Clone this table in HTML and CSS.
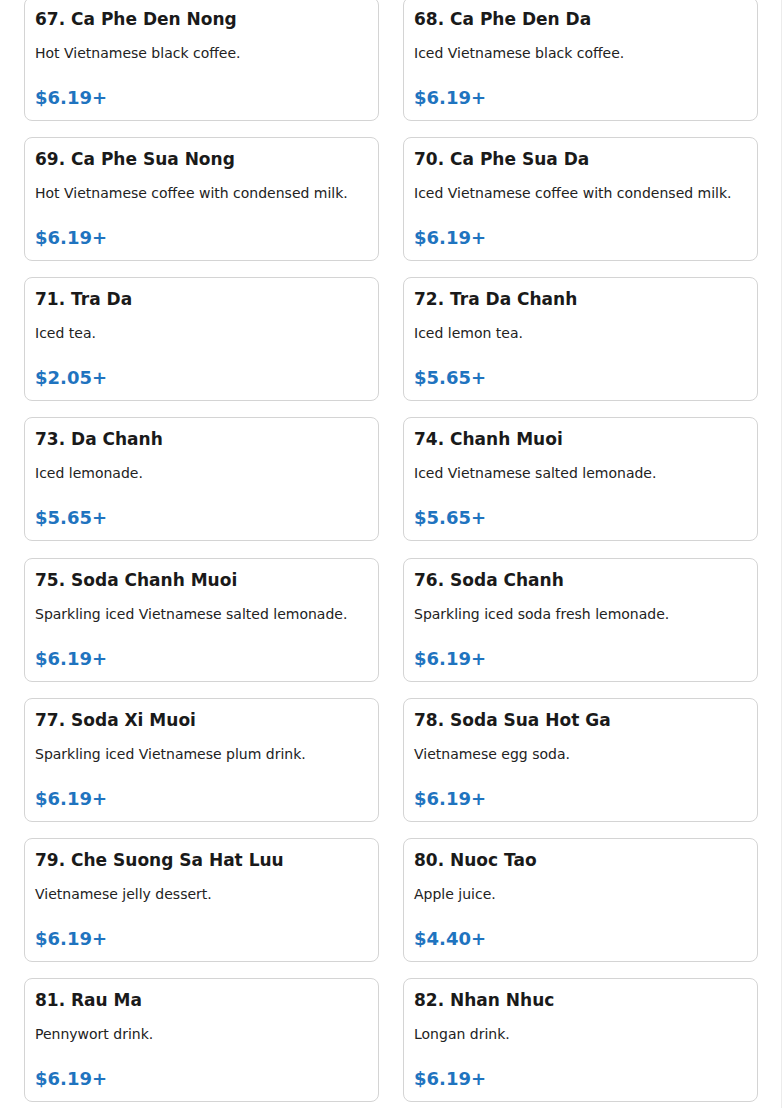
FILE: index.html
```html
<!DOCTYPE html>
<html>
<head>
<meta charset="utf-8">
<link rel="stylesheet" href="styles.css">
</head>
<body>
<div class="page">
  <div class="grid">
    <div class="card"><h3 class="name">67. Ca Phe Den Nong</h3><p class="desc">Hot Vietnamese black coffee.</p><div class="price">$6.19+</div></div>
    <div class="card"><h3 class="name">68. Ca Phe Den Da</h3><p class="desc">Iced Vietnamese black coffee.</p><div class="price">$6.19+</div></div>
    <div class="card"><h3 class="name">69. Ca Phe Sua Nong</h3><p class="desc">Hot Vietnamese coffee with condensed milk.</p><div class="price">$6.19+</div></div>
    <div class="card"><h3 class="name">70. Ca Phe Sua Da</h3><p class="desc">Iced Vietnamese coffee with condensed milk.</p><div class="price">$6.19+</div></div>
    <div class="card"><h3 class="name">71. Tra Da</h3><p class="desc">Iced tea.</p><div class="price">$2.05+</div></div>
    <div class="card"><h3 class="name">72. Tra Da Chanh</h3><p class="desc">Iced lemon tea.</p><div class="price">$5.65+</div></div>
    <div class="card"><h3 class="name">73. Da Chanh</h3><p class="desc">Iced lemonade.</p><div class="price">$5.65+</div></div>
    <div class="card"><h3 class="name">74. Chanh Muoi</h3><p class="desc">Iced Vietnamese salted lemonade.</p><div class="price">$5.65+</div></div>
    <div class="card"><h3 class="name">75. Soda Chanh Muoi</h3><p class="desc">Sparkling iced Vietnamese salted lemonade.</p><div class="price">$6.19+</div></div>
    <div class="card"><h3 class="name">76. Soda Chanh</h3><p class="desc">Sparkling iced soda fresh lemonade.</p><div class="price">$6.19+</div></div>
    <div class="card"><h3 class="name">77. Soda Xi Muoi</h3><p class="desc">Sparkling iced Vietnamese plum drink.</p><div class="price">$6.19+</div></div>
    <div class="card"><h3 class="name">78. Soda Sua Hot Ga</h3><p class="desc">Vietnamese egg soda.</p><div class="price">$6.19+</div></div>
    <div class="card"><h3 class="name">79. Che Suong Sa Hat Luu</h3><p class="desc">Vietnamese jelly dessert.</p><div class="price">$6.19+</div></div>
    <div class="card"><h3 class="name">80. Nuoc Tao</h3><p class="desc">Apple juice.</p><div class="price">$4.40+</div></div>
    <div class="card"><h3 class="name">81. Rau Ma</h3><p class="desc">Pennywort drink.</p><div class="price">$6.19+</div></div>
    <div class="card"><h3 class="name">82. Nhan Nhuc</h3><p class="desc">Longan drink.</p><div class="price">$6.19+</div></div>
  </div>
</div>
</body>
</html>
```

FILE: styles.css
```css
html, body {
  margin: 0;
  padding: 0;
  background: #fff;
}
body {
  font-family: "DejaVu Sans", sans-serif;
  color: #1a1a1a;
}
.page {
  width: 781px;
  border-right: 1px solid #ececec;
  min-height: 1111px;
  box-sizing: content-box;
}
.grid {
  display: grid;
  grid-template-columns: 355px 355px;
  column-gap: 24px;
  row-gap: 16.15px;
  padding: 0 24px;
  margin-top: -3px;
}
.card {
  border: 1px solid #d4d4d4;
  border-radius: 8px;
  padding: 10px 10px 10px;
  height: 124px;
  box-sizing: border-box;
  display: flex;
  flex-direction: column;
}
.name {
  margin: 0;
  font-size: 17px;
  line-height: 22px;
  font-weight: bold;
  color: #1a1a1a;
}
.desc {
  margin: 13px 0 0;
  font-size: 14px;
  line-height: 20px;
  color: #222;
}
.price {
  margin-top: auto;
  font-size: 18px;
  line-height: 24px;
  font-weight: bold;
  color: #1f74bf;
}
```
